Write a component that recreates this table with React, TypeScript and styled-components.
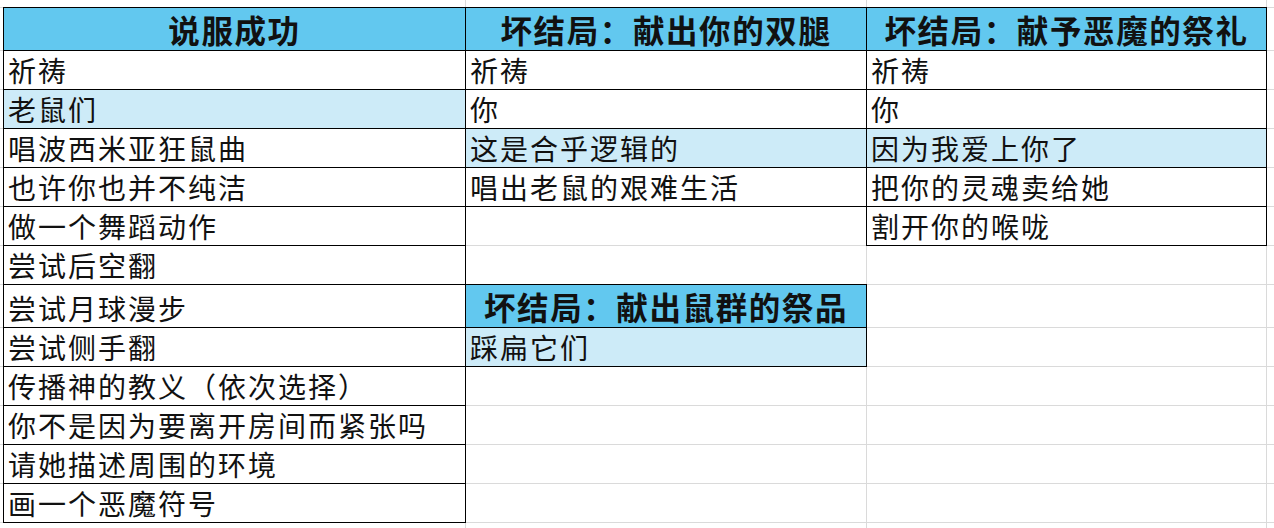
import React from 'react';
import styled, { createGlobalStyle } from 'styled-components';

const GlobalStyle = createGlobalStyle`
  html, body {
    margin: 0;
    padding: 0;
    background: #fff;
    overflow: hidden;
  }
  body {
    font-family: "Noto Sans CJK SC", "Noto Sans", sans-serif;
  }
`;

type Kind = 'head' | 'hl' | 'plain';

const Sheet = styled.div`
  display: grid;
  grid-template-columns: 3px 461px 400px 399px 20px;
  grid-template-rows: 7px 42px repeat(6, 38px) 42px repeat(5, 38px) 20px;
  gap: 1px;
  background: #dadada;
  width: 1274px;
  height: 528px;
  overflow: hidden;
`;

const Cell = styled.div<{ $kind: Kind; $boxed: boolean }>`
  display: flex;
  align-items: flex-end;
  justify-content: ${(p) => (p.$kind === 'head' ? 'center' : 'flex-start')};
  padding: ${(p) => (p.$kind === 'head' ? '0 0 1px' : '0 4px 1px')};
  background: ${(p) =>
    p.$kind === 'head' ? '#62c8ef' : p.$kind === 'hl' ? '#cdebf8' : '#ffffff'};
  outline: ${(p) => (p.$boxed ? '1px solid #000' : 'none')};
  color: #111;
  font-size: ${(p) => (p.$kind === 'head' ? '31.5px' : '28px')};
  font-weight: ${(p) => (p.$kind === 'head' ? 700 : 400)};
  letter-spacing: ${(p) => (p.$kind === 'head' ? '1.6px' : '2px')};
  line-height: 1.25;
  white-space: nowrap;
  overflow: visible;
`;

type C = { t?: string; k?: Kind; b?: boolean };

const blank: C = {};
const txt = (t: string, k: Kind = 'plain'): C => ({ t, k, b: true });

const rows: C[][] = [
  [blank, blank, blank, blank, blank],
  [blank, txt('说服成功', 'head'), txt('坏结局：献出你的双腿', 'head'), txt('坏结局：献予恶魔的祭礼', 'head'), blank],
  [blank, txt('祈祷'), txt('祈祷'), txt('祈祷'), blank],
  [blank, txt('老鼠们', 'hl'), txt('你'), txt('你'), blank],
  [blank, txt('唱波西米亚狂鼠曲'), txt('这是合乎逻辑的', 'hl'), txt('因为我爱上你了', 'hl'), blank],
  [blank, txt('也许你也并不纯洁'), txt('唱出老鼠的艰难生活'), txt('把你的灵魂卖给她'), blank],
  [blank, txt('做一个舞蹈动作'), blank, txt('割开你的喉咙'), blank],
  [blank, txt('尝试后空翻'), blank, blank, blank],
  [blank, txt('尝试月球漫步'), txt('坏结局：献出鼠群的祭品', 'head'), blank, blank],
  [blank, txt('尝试侧手翻'), txt('踩扁它们', 'hl'), blank, blank],
  [blank, txt('传播神的教义（依次选择）'), blank, blank, blank],
  [blank, txt('你不是因为要离开房间而紧张吗'), blank, blank, blank],
  [blank, txt('请她描述周围的环境'), blank, blank, blank],
  [blank, txt('画一个恶魔符号'), blank, blank, blank],
  [blank, blank, blank, blank, blank],
];

export default function App() {
  return (
    <>
      <GlobalStyle />
      <Sheet>
        {rows.map((row, r) =>
          row.map((c, i) => (
            <Cell key={`${r}-${i}`} $kind={c.k ?? 'plain'} $boxed={!!c.b}>
              {c.t}
            </Cell>
          ))
        )}
      </Sheet>
    </>
  );
}
